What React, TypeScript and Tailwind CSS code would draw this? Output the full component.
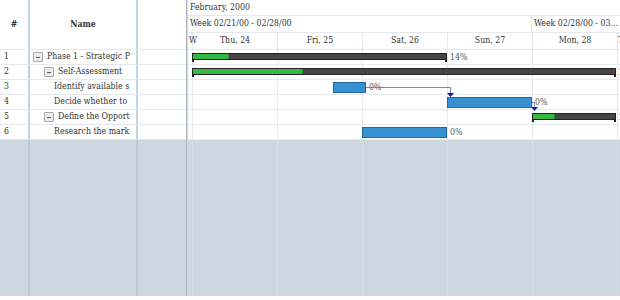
import React from "react";

type Task = {
  id: number;
  name: string;
  indent: number;
  expand?: boolean;
  kind: "summary" | "task";
  start: number; // px from chart left
  end: number;
  pct: number;
};

// names as the narrow column shows them
const tasks: Task[] = [
  { id: 1, name: "Phase 1 - Strategic P", indent: 0, expand: true, kind: "summary", start: 4, end: 259, pct: 14 },
  { id: 2, name: "Self-Assessment", indent: 1, expand: true, kind: "summary", start: 4, end: 428, pct: 26 },
  { id: 3, name: "Identify available s", indent: 2, kind: "task", start: 145, end: 178, pct: 0 },
  { id: 4, name: "Decide whether to", indent: 2, kind: "task", start: 259, end: 344, pct: 0 },
  { id: 5, name: "Define the Opport", indent: 1, expand: true, kind: "summary", start: 344, end: 428, pct: 26 },
  { id: 6, name: "Research the mark", indent: 2, kind: "task", start: 174, end: 259, pct: 0 },
];

const days = ["Thu, 24", "Fri, 25", "Sat, 26", "Sun, 27", "Mon, 28"];

const font = "font-['DejaVu_Serif_Condensed','DejaVu_Serif',serif]";

const DayCells = ({ line }: { line: string }) => (
  <>
    <div className={`w-[5px] shrink-0 border-r ${line}`} />
    {days.map((d) => (
      <div key={d} className={`w-[85px] shrink-0 border-r ${line}`} />
    ))}
    <div className="flex-1" />
  </>
);

const LeftCells = ({ children, bg }: { children?: React.ReactNode[]; bg: string }) => (
  <div className={`flex h-full ${bg}`}>
    <div className="w-[30px] shrink-0 border-r-2 border-[#c3d2e0] overflow-hidden">{children?.[0]}</div>
    <div className="w-[108px] shrink-0 border-r-2 border-[#c3d2e0] overflow-hidden">{children?.[1]}</div>
    <div className="flex-1" />
  </div>
);

const Bar = ({ t }: { t: Task }) => {
  const w = t.end - t.start;
  if (t.kind === "summary") {
    return (
      <>
        <div
          className="absolute top-[3px] h-[7px] border border-[#222] bg-[#454545]"
          style={{ left: t.start, width: w }}
        >
          <div className="h-full bg-[#35b844] border-r border-[#2a8a33]" style={{ width: Math.round((w * t.pct) / 100) }} />
        </div>
        <div className="absolute top-[9px] w-[2px] h-[3px] bg-[#222]" style={{ left: t.start }} />
        <div className="absolute top-[9px] w-[2px] h-[3px] bg-[#222]" style={{ left: t.end - 2 }} />
        <span className="absolute top-[2px] leading-[11px] text-[#555]" style={{ left: t.end + 3 }}>
          {t.pct}%
        </span>
      </>
    );
  }
  return (
    <>
      <div
        className="absolute top-[2px] h-[11px] border border-[#2467a0] bg-[#3790d2]"
        style={{ left: t.start, width: w }}
      />
      <span className="absolute top-[2px] leading-[11px] text-[#555]" style={{ left: t.end + 3 }}>
        {t.pct}%
      </span>
    </>
  );
};

export default function App() {
  return (
    <div className={`w-[620px] h-[300px] bg-white text-[#333] ${font} text-[8.7px] overflow-hidden`}>
      <div className="flex h-[296px] bg-[#cdd7e0]">
        {/* grid */}
        <div className="w-[186px] shrink-0 flex flex-col">
          <div className="h-[50px] bg-white border-b border-[#e2e8ee]">
            <LeftCells bg="bg-white">
              {[
                <div key="a" className="h-full flex items-center justify-center font-bold">#</div>,
                <div key="b" className="h-full flex items-center justify-center font-bold">Name</div>,
              ]}
            </LeftCells>
          </div>
          {tasks.map((t) => (
            <div key={t.id} className="h-[15px] border-b border-[#e2e8ee] bg-white">
              <LeftCells bg="bg-white">
                {[
                  <div key="a" className="h-full flex items-center pl-[4px]">{t.id}</div>,
                  <div
                    key="b"
                    className="h-full flex items-center whitespace-nowrap"
                    style={{ paddingLeft: t.expand ? 3 + t.indent * 11 : 24 }}
                  >
                    {t.expand && (
                      <span className="w-[10px] h-[10px] mr-[4px] shrink-0 border border-[#a8a8a8] bg-[#ececec] rounded-[1px] flex items-center justify-center">
                        <span className="w-[4px] h-px bg-[#555]" />
                      </span>
                    )}
                    {t.name}
                  </div>,
                ]}
              </LeftCells>
            </div>
          ))}
          <div className="flex-1">
            <div className="flex h-full">
              <div className="w-[30px] shrink-0 border-r-2 border-[#b9c9d8]" />
              <div className="w-[108px] shrink-0 border-r-2 border-[#b9c9d8]" />
              <div className="flex-1" />
            </div>
          </div>
        </div>

        {/* splitter */}
        <div className="w-[2px] shrink-0 bg-[#a9b6c2] border-r border-[#d4dde6]" />

        {/* chart */}
        <div className="flex-1 flex flex-col overflow-hidden">
          <div className="h-[50px] bg-white flex flex-col">
            <div className="h-[16px] border-b border-[#e2e8ee] flex items-center pl-[2px] whitespace-nowrap">
              February, 2000
            </div>
            <div className="h-[17px] border-b border-[#e2e8ee] flex whitespace-nowrap">
              <div className="w-[344px] shrink-0 border-r border-[#e2e8ee] flex items-center pl-[2px]">
                Week 02/21/00 - 02/28/00
              </div>
              <div className="flex-1 flex items-center pl-[2px]">Week 02/28/00 - 03...</div>
            </div>
            <div className="h-[17px] border-b border-[#e2e8ee] flex whitespace-nowrap">
              <div className="w-[5px] shrink-0 border-r border-[#e2e8ee] flex items-center pl-[1px]">W</div>
              {days.map((d) => (
                <div key={d} className="w-[85px] shrink-0 border-r border-[#e2e8ee] flex items-center justify-center">
                  {d}
                </div>
              ))}
              <div className="flex-1 flex items-center">T</div>
            </div>
          </div>
          <div className="relative">
            {tasks.map((t) => (
              <div key={t.id} className="relative h-[15px] border-b border-[#e6ebf0] bg-white flex">
                <DayCells line="border-[#e6ebf0]" />
                <Bar t={t} />
              </div>
            ))}
            <svg className="absolute left-0 top-0 pointer-events-none" width="432" height="90">
              <polyline points="178,37.5 262.5,37.5 262.5,44" fill="none" stroke="#7a7ad6" strokeWidth="1" />
              <path d="M259,43 L266,43 L262.5,47 Z" fill="#1a1a9a" />
              <polyline points="344,52.5 346.5,52.5 346.5,58" fill="none" stroke="#7a7ad6" strokeWidth="1" />
              <path d="M343,57 L350,57 L346.5,61 Z" fill="#1a1a9a" />
            </svg>
          </div>
          <div className="flex-1 flex">
            <DayCells line="border-[#d6dee6]" />
          </div>
        </div>
      </div>
    </div>
  );
}
